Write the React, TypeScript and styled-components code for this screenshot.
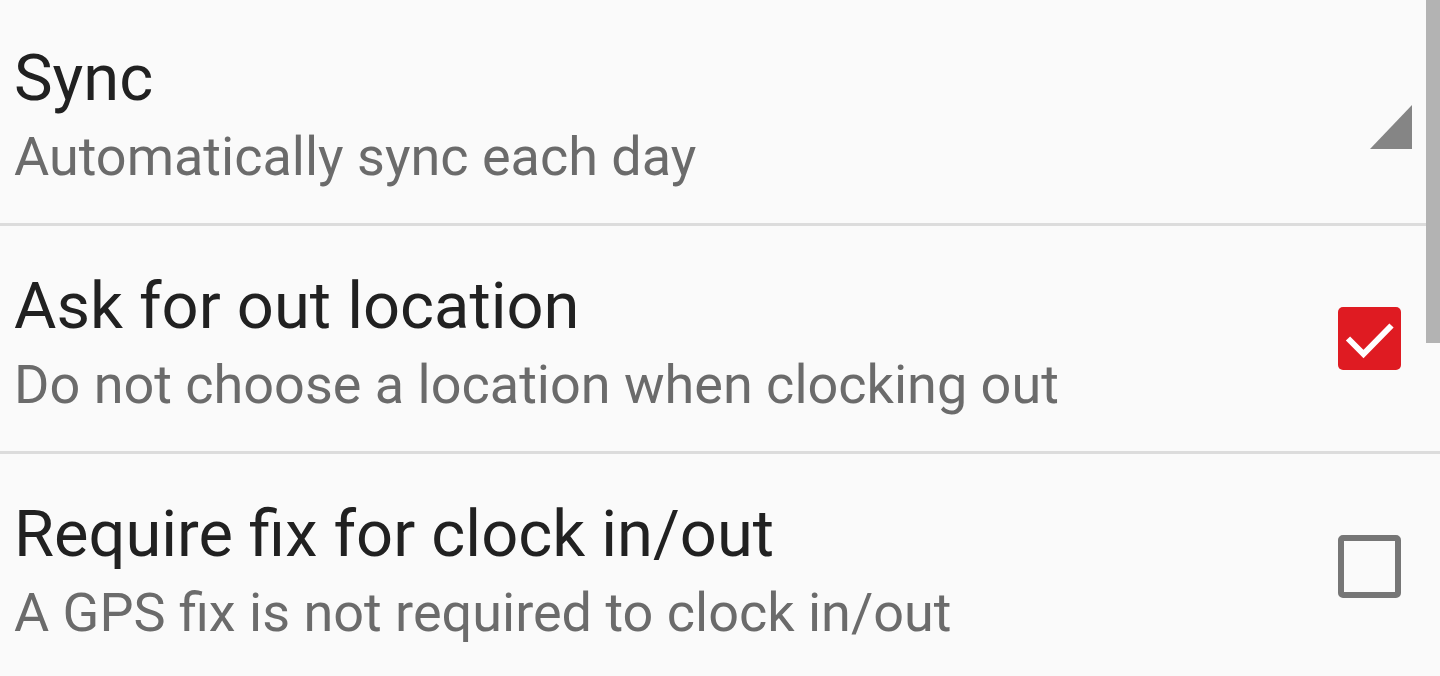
import React from "react";
import styled, { createGlobalStyle } from "styled-components";

const Global = createGlobalStyle`
  html, body { margin: 0; padding: 0; background: #fafafa; }
  body { font-family: Roboto, "Noto Sans", sans-serif; overflow: hidden; }
`;

const Screen = styled.div`
  position: relative;
  width: 1440px;
  height: 676px;
  overflow: hidden;
  background: #fafafa;
`;

const List = styled.div`
  display: flex;
  flex-direction: column;
  margin-top: -2px;
`;

const Row = styled.div`
  display: grid;
  grid-template-columns: 1fr 63px;
  align-items: center;
  height: 228px;
  box-sizing: border-box;
  padding: 0 39px 0 14px;
  border-bottom: 3px solid #dcdcdc;
  flex-shrink: 0;
`;

const Texts = styled.div`
  display: flex;
  flex-direction: column;
  align-self: start;
  padding-top: 42px;
`;

const Title = styled.div`
  font-size: 65px;
  line-height: 76px;
  color: #212121;
  white-space: nowrap;
`;

const Summary = styled.div`
  font-size: 54px;
  line-height: 63px;
  margin-top: 9px;
  color: #6b6b6b;
  white-space: nowrap;
`;

const Control = styled.div`
  display: flex;
  justify-content: flex-end;
  align-items: center;
`;

const SpinnerArrow = styled.svg`
  display: block;
  width: 42px;
  height: 77px;
  margin-right: -11px;
`;

const Box = styled.div<{ $checked: boolean }>`
  width: 63px;
  height: 63px;
  box-sizing: border-box;
  border-radius: 5px;
  background: ${(p) => (p.$checked ? "#df1b22" : "transparent")};
  border: ${(p) => (p.$checked ? "none" : "6.5px solid #767676")};
  display: flex;
  align-items: center;
  justify-content: center;
`;

const Scrollbar = styled.div`
  position: absolute;
  top: 0;
  right: 0;
  width: 14px;
  height: 343px;
  background: #b3b3b3;
`;

const Checkbox: React.FC<{ checked: boolean }> = ({ checked }) => (
  <Box $checked={checked}>
    {checked && (
      <svg width="63" height="63" viewBox="0 0 63 63">
        <polyline
          points="10,31.5 25.5,47 53.5,18.5"
          fill="none"
          stroke="#ffffff"
          strokeWidth="6"
          strokeLinejoin="miter"
        />
      </svg>
    )}
  </Box>
);

type Pref = {
  title: string;
  summary: string;
  kind: "spinner" | "check";
  checked?: boolean;
};

const prefs: Pref[] = [
  { title: "Sync", summary: "Automatically sync each day", kind: "spinner" },
  {
    title: "Ask for out location",
    summary: "Do not choose a location when clocking out",
    kind: "check",
    checked: true,
  },
  {
    title: "Require fix for clock in/out",
    summary: "A GPS fix is not required to clock in/out",
    kind: "check",
    checked: false,
  },
];

export default function App() {
  return (
    <Screen>
      <Global />
      <List>
        {prefs.map((p) => (
          <Row key={p.title}>
            <Texts>
              <Title>{p.title}</Title>
              <Summary>{p.summary}</Summary>
            </Texts>
            <Control>
              {p.kind === "spinner" ? (
                <SpinnerArrow viewBox="0 0 42 77">
                  <polygon points="0,77 42,77 42,33" fill="#858585" />
                </SpinnerArrow>
              ) : (
                <Checkbox checked={!!p.checked} />
              )}
            </Control>
          </Row>
        ))}
      </List>
      <Scrollbar />
    </Screen>
  );
}
